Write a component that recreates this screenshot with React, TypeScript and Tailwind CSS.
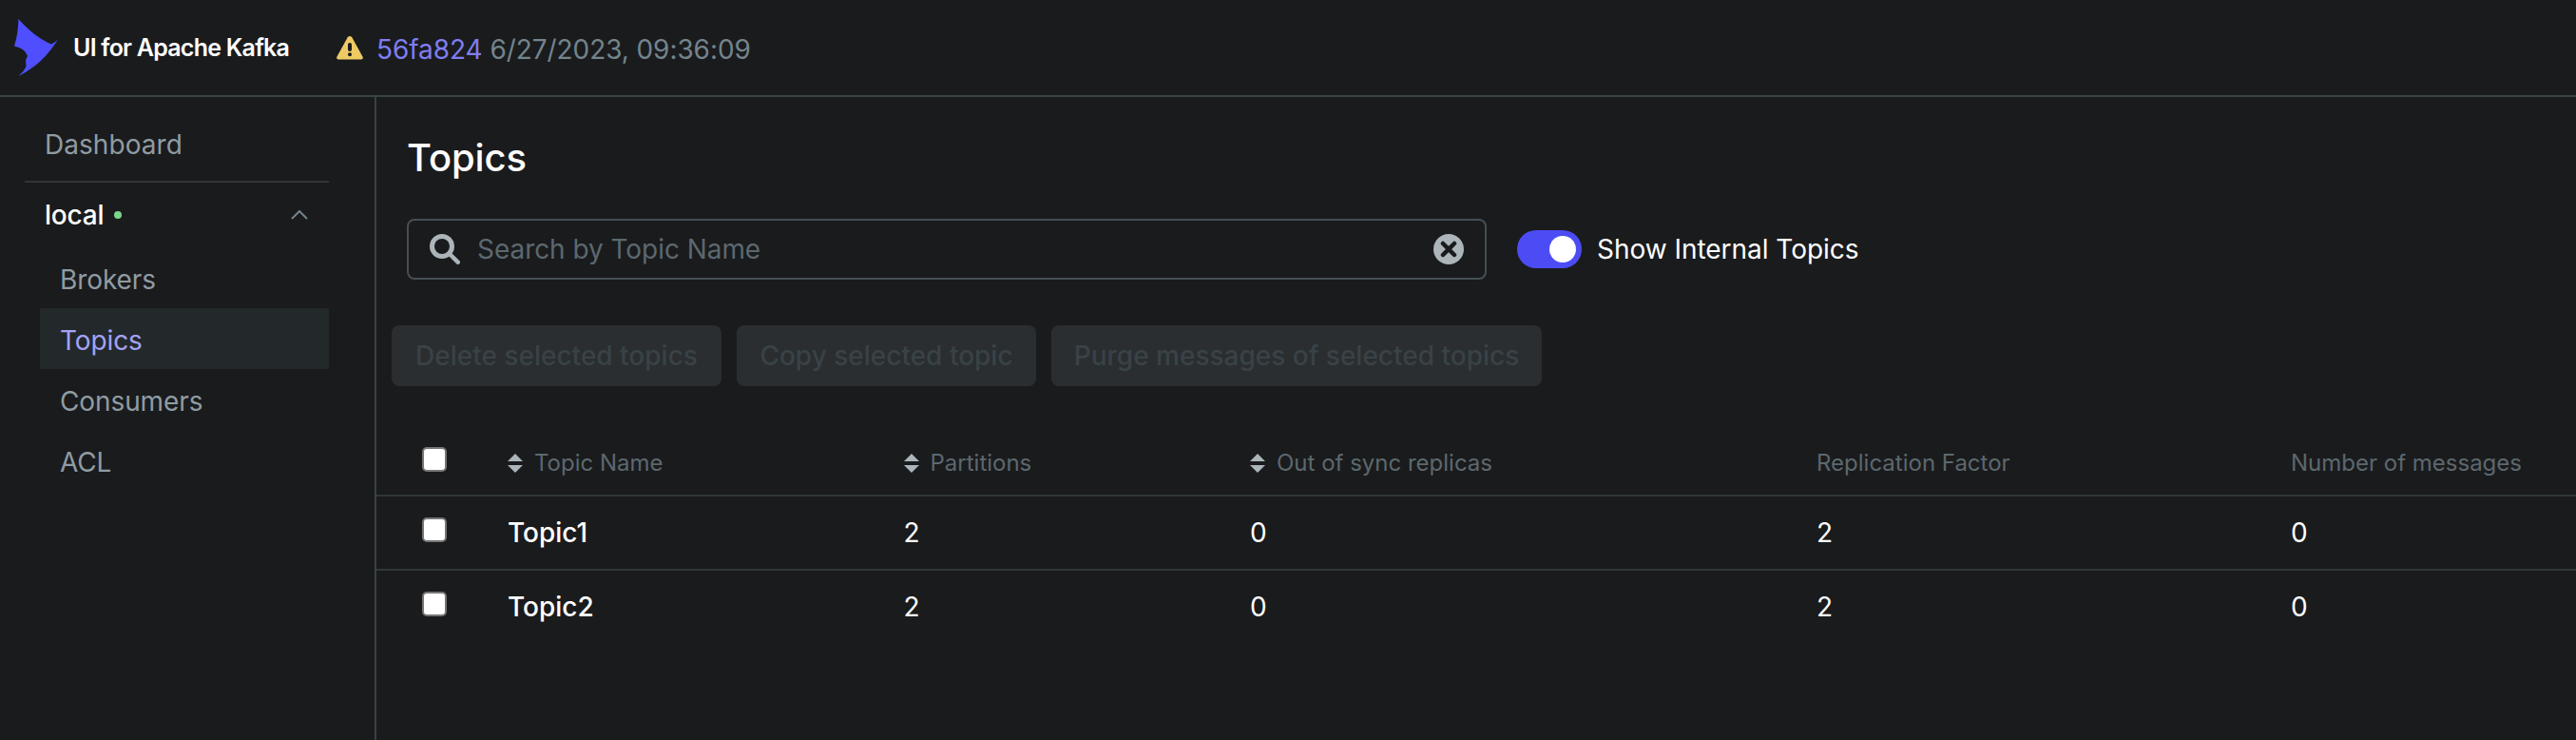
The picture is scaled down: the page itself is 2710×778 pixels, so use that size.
const topics = ['Topic1', 'Topic2'];

function SortIcon() {
  return (
    <svg className="h-5 w-4 shrink-0" viewBox="0 0 16 20" fill="#abb5ba">
      <path d="M8 0L16 8H0Z" />
      <path d="M8 20L0 12H16Z" />
    </svg>
  );
}

function Checkbox() {
  return <span className="block h-[26px] w-[26px] rounded-[5px] border-2 border-[#767676] bg-white" />;
}

function NavItem({ label, active = false }: { label: string; active?: boolean }) {
  return (
    <a
      className={
        active
          ? 'flex h-16 items-center bg-[#23282b] pl-[21px] pt-[3px] tracking-[-0.1px] text-[#a3a3f5]'
          : 'flex h-16 items-center pl-[21px] pt-[3px] tracking-[-0.1px] text-[#8f9ca3]'
      }
    >
      {label}
    </a>
  );
}

function ActionButton({ label, width }: { label: string; width: string }) {
  return (
    <button className={`${width} h-16 whitespace-nowrap rounded-lg bg-[#2a2e31] text-center font-medium text-[#394246]`} disabled>
      {label}
    </button>
  );
}

function HeaderCell({ label, sortable = false }: { label: string; sortable?: boolean }) {
  return (
    <div className="flex items-center gap-3 pb-0.5">
      {sortable && <SortIcon />}
      <span>{label}</span>
    </div>
  );
}

export default function App() {
  return (
    <div className="flex h-[778px] w-[2710px] flex-col overflow-hidden bg-[#1a1b1d] font-['Inter',sans-serif] text-[28px] leading-[40px] text-white [font-optical-sizing:none]">
      <header className="flex h-[102px] shrink-0 items-center border-b-2 border-[#394246]">
        <svg className="ml-[15px] h-[60px] w-[46px] shrink-0" viewBox="0 0 46 60" fill="#4f4fff">
          <path d="M4.500 0C14 11 25 20 39 26.500Q43 24.500 46 21.500C36 37.500 24 50 4.500 60Q10 55.500 12.500 50L12 43L14 39C12 33 7 30 0 28.500C3 20 4 10 4.500 0Z" />
        </svg>
        <span className="ml-4 w-[228px] whitespace-nowrap text-[25px] font-semibold tracking-[-0.77px]">UI for Apache Kafka</span>
        <svg className="ml-[49px] h-[25px] w-7 shrink-0" viewBox="0 0 28 25">
          <path d="M11.700 1.300Q14-1.200 16.300 1.300L27.600 21.800Q28.500 24.500 26 24.500H2Q-.5 24.500.4 21.800Z" fill="#edca64" />
          <path d="M14 9V14" stroke="#1a1b1d" strokeWidth="4" strokeLinecap="round" />
          <circle cx="14" cy="19.300" r="2" fill="#1a1b1d" />
        </svg>
        <span className="ml-3.5 pt-[3px] tracking-[-0.08px] text-[#7e7ef1]">56fa824</span>
        <span className="ml-2 pt-[3px] tracking-[-0.08px] text-[#73848c]">6/27/2023, 09:36:09</span>
      </header>

      <div className="flex min-h-0 flex-1">
        <nav className="w-[396px] shrink-0 border-r-2 border-[#394246] pl-[26px] pr-12 pt-[18px]">
          <a className="flex h-[70px] items-center pb-1.5 pl-[21px] tracking-[0.05px] text-[#8f9ca3]">Dashboard</a>
          <div className="border-t-2 border-[#2f363a]">
            <div className="flex h-[68px] items-center pl-[21px] pr-[22px]">
              <span className="font-medium tracking-[-0.2px]">local</span>
              <span className="ml-[11px] h-2 w-2 rounded-full bg-[#7fd48c]" />
              <svg className="ml-auto h-[10px] w-[18px]" viewBox="0 0 18 10" fill="none" stroke="#73848c" strokeWidth="2">
                <path d="M1 9L9 1L17 9" />
              </svg>
            </div>
            <div className="pl-4">
              <NavItem label="Brokers" />
              <NavItem label="Topics" active />
              <NavItem label="Consumers" />
              <NavItem label="ACL" />
            </div>
          </div>
        </nav>

        <main className="min-w-0 flex-1">
          <h1 className="flex h-32 items-center pl-8 text-[40px] font-medium tracking-[-0.1px]">Topics</h1>
          <div className="flex h-16 items-center pl-8">
            <div className="flex h-16 w-[1136px] items-center rounded-lg border-2 border-[#454f54] px-[22px]">
              <svg className="h-8 w-8 shrink-0" viewBox="0 0 32 32" fill="none" stroke="#abb5ba">
                <circle cx="13" cy="13" r="10.500" strokeWidth="5" />
                <path d="M21 21L29.700 29.700" strokeWidth="4.500" strokeLinecap="round" />
              </svg>
              <span className="ml-[18px] flex-1 tracking-[-0.05px] text-[#5c686e]">Search by Topic Name</span>
              <svg className="h-8 w-8 shrink-0" viewBox="0 0 32 32">
                <circle cx="16" cy="16" r="16" fill="#abb5ba" />
                <path d="M10 10L22 22M22 10L10 22" stroke="#1a1b1d" strokeWidth="4.500" strokeLinecap="round" />
              </svg>
            </div>
            <div className="ml-8 flex h-10 w-[68px] items-center justify-end rounded-full bg-[#4c4cf5] pr-1.5">
              <span className="h-7 w-7 rounded-full bg-white" />
            </div>
            <span className="ml-4 tracking-[-0.03px]">Show Internal Topics</span>
          </div>
          <div className="mt-12 flex gap-4 pl-4">
            <ActionButton label="Delete selected topics" width="w-[347px]" />
            <ActionButton label="Copy selected topic" width="w-[315px]" />
            <ActionButton label="Purge messages of selected topics" width="w-[516px]" />
          </div>
          <div className="mt-[50px]">
            <div className="grid h-[66px] grid-cols-[90px_416.5px_364.5px_596px_499px_1fr] border-b-2 border-[#2f363a] pl-12 text-2xl leading-8 text-[#5c686e]">
              <div className="pt-[14px]">
                <Checkbox />
              </div>
              <HeaderCell label="Topic Name" sortable />
              <HeaderCell label="Partitions" sortable />
              <HeaderCell label="Out of sync replicas" sortable />
              <HeaderCell label="Replication Factor" />
              <HeaderCell label="Number of messages" />
            </div>
            {topics.map((name) => (
              <div
                key={name}
                className="grid h-[78px] grid-cols-[90px_416.5px_364.5px_596px_499px_1fr] items-center border-b-2 border-[#2f363a] pl-12 last:border-transparent"
              >
                <div className="pb-1.5">
                  <Checkbox />
                </div>
                <span className="font-medium">{name}</span>
                <span>2</span>
                <span>0</span>
                <span>2</span>
                <span>0</span>
              </div>
            ))}
          </div>
        </main>
      </div>
    </div>
  );
}
